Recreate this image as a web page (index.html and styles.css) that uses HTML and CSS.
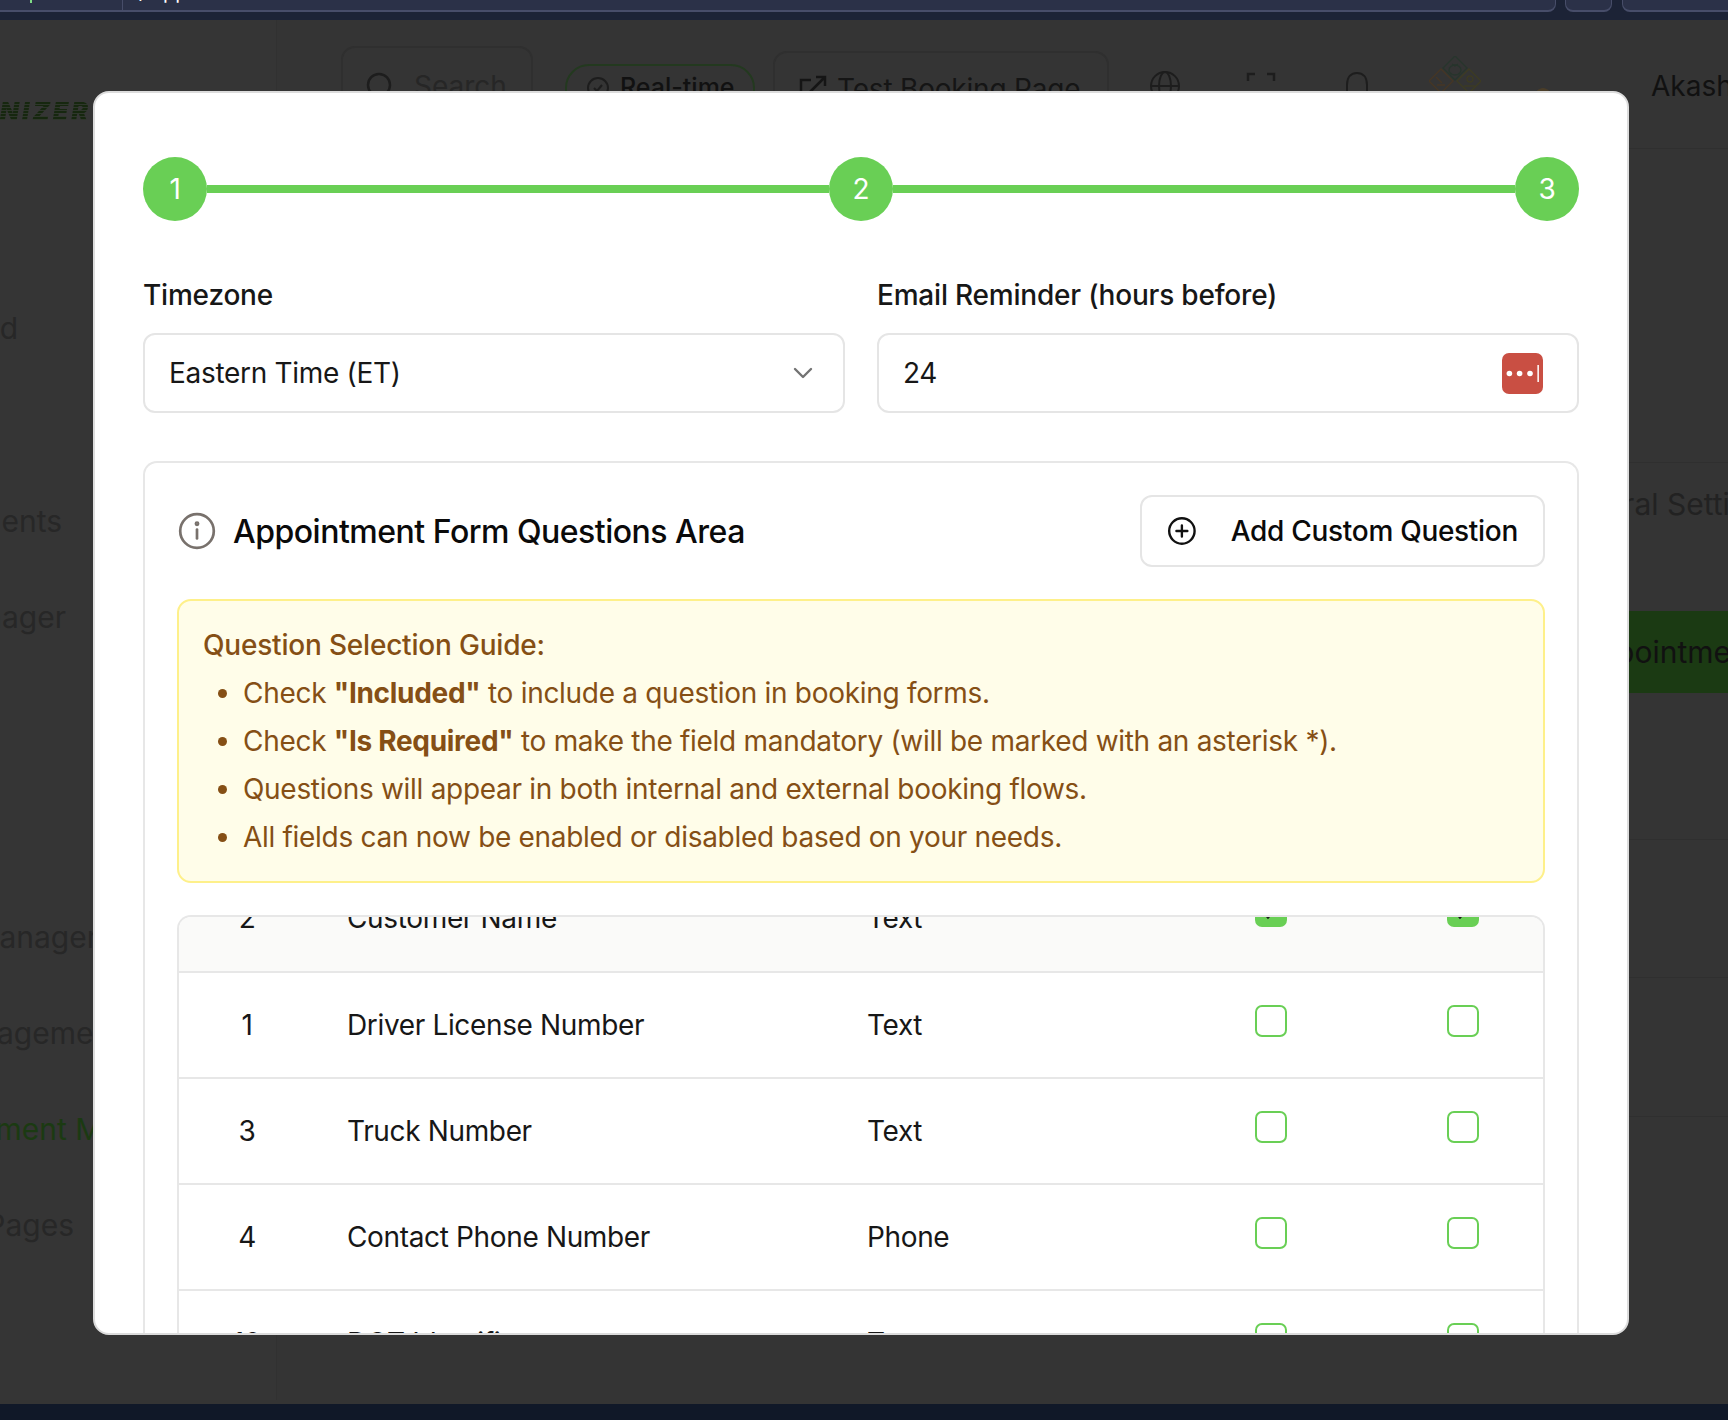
FILE: index.html
```html
<!DOCTYPE html>
<html lang="en">

<head>
    <meta charset="UTF-8">
    <title>Appointment Settings</title>
    <link rel="stylesheet" href="styles.css">
</head>

<body>
    <div class="browser-strip">
        <div class="tab tab-first"><span class="tab-mark"></span></div>
        <div class="tab tab-url"><span class="tab-text">/ app</span></div>
        <div class="tab tab-small"></div>
        <div class="tab tab-end"></div>
    </div>

    <div class="app">
        <aside class="sidebar">
            <div class="logo"><span>ORGANIZER</span></div>
            <ul class="side-nav">
                <li class="n1">Dashboard</li>
                <li class="n2">Appointments</li>
                <li class="n3">Task Manager</li>
                <li class="n4">Fleet Manager</li>
                <li class="n5">User Management</li>
                <li class="n6 active">Appointment Manager</li>
                <li class="n7">Pages</li>
            </ul>
        </aside>
        <div class="content">
            <header class="topbar">
                <div class="pill search">
                    <svg width="30" height="30" viewBox="0 0 30 30" fill="none" stroke="#1d1d1d" stroke-width="2.5"><circle cx="14" cy="14" r="11"/></svg>
                    <span>Search</span>
                </div>
                <div class="pill realtime">
                    <svg width="24" height="24" viewBox="0 0 24 24" fill="none" stroke="#1d1d1d" stroke-width="2"><circle cx="12" cy="12" r="10"/><path d="M8 12l3 3 5-6"/></svg>
                    <span>Real-time</span>
                </div>
                <div class="pill booking">
                    <svg width="30" height="30" viewBox="0 0 30 30" fill="none" stroke="#151515" stroke-width="2.5"><path d="M13 6H3v21h21V17M12 18L27 3M18 3h9v9"/></svg>
                    <span>Test Booking Page</span>
                </div>
                <svg class="top-icon globe" width="30" height="30" viewBox="0 0 30 30" fill="none" stroke="#1d1d1d" stroke-width="2"><circle cx="15" cy="15" r="14"/><ellipse cx="15" cy="15" rx="6" ry="14"/><path d="M1 15h28"/></svg>
                <svg class="top-icon" width="30" height="30" viewBox="0 0 30 30" fill="none" stroke="#1d1d1d" stroke-width="2.5"><path d="M2 10V3h7M21 3h7v7"/></svg>
                <svg class="top-icon" width="30" height="30" viewBox="0 0 30 30" fill="none" stroke="#1d1d1d" stroke-width="2"><path d="M5 30V14C5 6 9 2 15 2s10 4 10 12v16"/></svg>
                <svg class="badge-icon" width="52" height="38" viewBox="0 0 52 38" fill="none" stroke-width="1.300">
                    <g stroke="#27352c"><path d="M26 0l12 12-12 12-12-12z"/><ellipse cx="26" cy="14" rx="6" ry="5"/><path d="M23 8l3 2 3-2"/></g>
                    <g stroke="#453624"><path d="M12 13l12 12-12 12L0 25z"/><path d="M7 21l6 6M8 29h8"/></g>
                    <g stroke="#3d3b22"><path d="M40 13l12 12-12 12-12-12z"/><circle cx="41" cy="23" r="3"/><path d="M35 30h11"/></g>
                </svg>
                <svg class="small-mark" width="14" height="4" viewBox="0 0 14 4"><path d="M0 4C2 1 5 0 7 0s5 1 7 4z" fill="#4a3d28"/></svg>
                <span class="user">Akash</span>
            </header>
            <div class="page-body">
                <div class="settings-card">
                    <div class="settings-row general">General Settings</div>
                    <div class="settings-row green">Appointment</div>
                    <div class="settings-line line-a"></div>
                    <div class="settings-line line-b"></div>
                    <div class="settings-line line-c"></div>
                </div>
                <div class="bottom-card"></div>
            </div>
        </div>
    </div>
    <div class="foot-bar"></div>

    <div class="modal">
        <div class="stepper">
            <span class="step">1</span>
            <span class="step-line"></span>
            <span class="step">2</span>
            <span class="step-line"></span>
            <span class="step">3</span>
        </div>

        <div class="field-row">
            <div class="field">
                <label>Timezone</label>
                <div class="input">
                    <span>Eastern Time (ET)</span>
                    <svg class="chevron" width="20" height="12" viewBox="0 0 20 12" fill="none" stroke="#737373" stroke-width="2.4" stroke-linecap="round" stroke-linejoin="round"><path d="M2 2l8 8 8-8"/></svg>
                </div>
            </div>
            <div class="field">
                <label>Email Reminder (hours before)</label>
                <div class="input">
                    <span>24</span>
                    <svg class="pass-icon" width="41" height="41" viewBox="0 0 41 41"><rect width="41" height="41" rx="7" fill="#c94f43"/><circle cx="7.400" cy="20.500" r="2.800" fill="#fff"/><circle cx="17.600" cy="20.500" r="2.800" fill="#fff"/><circle cx="28" cy="20.500" r="2.800" fill="#fff"/><rect x="35.400" y="12" width="1.500" height="17" fill="#fff"/></svg>
                </div>
            </div>
        </div>

        <section class="questions">
            <div class="questions-head">
                <div class="questions-title">
                    <svg width="38" height="38" viewBox="0 0 38 38" fill="none" stroke="#78716c" stroke-width="2.700"><circle cx="19" cy="19" r="16.800"/><path d="M19 17.500v9" stroke-linecap="round"/><circle cx="19" cy="11.800" r="1.100"/></svg>
                    <h2>Appointment Form Questions Area</h2>
                </div>
                <button class="add-btn">
                    <svg width="30" height="30" viewBox="0 0 30 30" fill="none" stroke="#111" stroke-width="2.400" stroke-linecap="round"><circle cx="15" cy="15" r="12.800"/><path d="M15 9.500v11M9.500 15h11"/></svg>
                    <span>Add Custom Question</span>
                </button>
            </div>

            <div class="guide">
                <p>Question Selection Guide:</p>
                <ul>
                    <li>Check <b>"Included"</b> to include a question in booking forms.</li>
                    <li>Check <b>"Is Required"</b> to make the field mandatory (will be marked with an asterisk *).</li>
                    <li>Questions will appear in both internal and external booking flows.</li>
                    <li>All fields can now be enabled or disabled based on your needs.</li>
                </ul>
            </div>

            <div class="table-wrap">
                <div class="q-row q-row-cut">
                    <span class="c-num">2</span><span class="c-name">Customer Name</span><span class="c-type">Text</span>
                    <span class="c-check"><i class="box box-on"><svg width="28" height="28" viewBox="0 0 28 28" fill="none" stroke="#1a1a1a" stroke-width="3"><path d="M5 13l6 7 12-14"/></svg></i></span>
                    <span class="c-check"><i class="box box-on"><svg width="28" height="28" viewBox="0 0 28 28" fill="none" stroke="#1a1a1a" stroke-width="3"><path d="M5 13l6 7 12-14"/></svg></i></span>
                </div>
                <div class="q-row">
                    <span class="c-num">1</span><span class="c-name">Driver License Number</span><span class="c-type">Text</span>
                    <span class="c-check"><i class="box"></i></span><span class="c-check"><i class="box"></i></span>
                </div>
                <div class="q-row">
                    <span class="c-num">3</span><span class="c-name">Truck Number</span><span class="c-type">Text</span>
                    <span class="c-check"><i class="box"></i></span><span class="c-check"><i class="box"></i></span>
                </div>
                <div class="q-row">
                    <span class="c-num">4</span><span class="c-name">Contact Phone Number</span><span class="c-type">Phone</span>
                    <span class="c-check"><i class="box"></i></span><span class="c-check"><i class="box"></i></span>
                </div>
                <div class="q-row">
                    <span class="c-num">10</span><span class="c-name">DOT Identifier</span><span class="c-type">Text</span>
                    <span class="c-check"><i class="box"></i></span><span class="c-check"><i class="box"></i></span>
                </div>
            </div>
        </section>
    </div>
</body>

</html>
```

FILE: styles.css
```css
body,
html {
    margin: 0;
    padding: 0;
}

body {
    width: 1728px;
    height: 1420px;
    overflow: hidden;
    position: relative;
    background-color: #343434;
    font-family: Inter, "Liberation Sans", sans-serif;
    color: #111;
}

/* browser strip */
.browser-strip {
    height: 20px;
    background-color: #1c2336;
    display: flex;
    gap: 10px;
}

.tab {
    height: 10px;
    background-color: #2b3148;
    border-bottom: 2px solid #474d69;
}

.tab-first {
    width: 122px;
    border-right: 1px solid #474d69;
    margin-right: -10px;
}

.tab-mark {
    display: block;
    width: 2px;
    height: 3px;
    margin-left: 30px;
    background-color: #7fdc86;
}

.tab-url {
    width: 1432px;
    border-right: 1px solid #474d69;
    border-radius: 0 0 8px 0;
}

.tab-text {
    display: block;
    margin: -20px 0 0 16px;
    font-size: 20px;
    color: #fff;
}

.tab-small {
    width: 45px;
    margin-left: -1px;
    border-left: 1px solid #474d69;
    border-right: 1px solid #474d69;
    border-radius: 0 0 8px 8px;
}

.tab-end {
    flex: 1;
    border-left: 1px solid #474d69;
    border-radius: 0 0 0 8px;
}

/* page behind the dialog */
.app {
    height: 1384px;
    display: flex;
}

.sidebar {
    width: 276px;
    height: 1380px;
    flex-shrink: 0;
    border-right: 1px solid #313131;
    background-color: #353535;
}

.logo {
    width: 91px;
    height: 74px;
    padding-top: 76px;
    display: flex;
    justify-content: flex-end;
    font-size: 25px;
    font-weight: 900;
    font-style: italic;
    letter-spacing: 3px;
    white-space: nowrap;
}

.logo span {
    color: transparent;
    background: repeating-linear-gradient(#16270f 0 2px, #2f362c 2px 3px);
    -webkit-background-clip: text;
    background-clip: text;
}

.side-nav {
    list-style: none;
    margin: 0;
    padding: 0;
    font-size: 30px;
    color: #272727;
    white-space: nowrap;
}

.side-nav li {
    height: 36px;
    line-height: 36px;
    display: flex;
    justify-content: flex-end;
}

.side-nav .n1 { margin-top: 140px; width: 18px; }
.side-nav .n2 { margin-top: 157px; width: 62px; }
.side-nav .n3 { margin-top: 60px; width: 66px; }
.side-nav .n4 { margin-top: 284px; width: 98px; }
.side-nav .n5 { margin-top: 60px; width: 121px; }
.side-nav .n6 { margin-top: 60px; width: 201px; }
.side-nav .n7 { margin-top: 60px; width: 74px; }

.side-nav .active {
    color: #1b3a12;
}

.content {
    flex: 1;
    min-width: 0;
}

.topbar {
    height: 128px;
    display: flex;
    align-items: flex-start;
    padding-left: 64px;
    border-bottom: 1px solid #2f2f2f;
    font-size: 28px;
    color: #151515;
}

.pill {
    margin-top: 26px;
    height: 80px;
    display: flex;
    align-items: center;
    white-space: nowrap;
    flex-shrink: 0;
    gap: 16px;
    padding: 0 16px;
    border: 2px solid #2f2f2f;
    border-radius: 14px;
    box-sizing: border-box;
}

.search {
    width: 192px;
    gap: 19px;
    padding-left: 22px;
    color: #262626;
}

.realtime {
    margin: 44px 0 0 32px;
    width: 190px;
    align-items: flex-start;
    gap: 10px;
    padding: 6px 0 0 19px;
    border-color: #23391f;
    border-radius: 24px;
    font-size: 25px;
    font-weight: 500;
    color: #111;
}

.realtime svg {
    margin-top: 4px;
}

.booking {
    margin: 31px 0 0 18px;
    width: 336px;
    gap: 9px;
    padding: 0 0 5px 23px;
    letter-spacing: -0.2px;
}

.top-icon {
    margin: 51px 0 0 66px;
    flex-shrink: 0;
}

.top-icon.globe {
    margin-left: 41px;
}

.badge-icon {
    margin: 36px 0 0 57px;
    flex-shrink: 0;
}

.small-mark {
    margin: 68px 0 0 55px;
    flex-shrink: 0;
}

.user {
    margin: 49px 0 0 101px;
    white-space: nowrap;
    color: #111;
}

.page-body {
    padding-left: 52px;
}

.settings-card {
    height: 1201px;
    margin-left: 1211px;
}

.settings-row {
    font-size: 30px;
    line-height: 36px;
    color: #222;
    white-space: nowrap;
}

.general {
    margin-top: 313px;
    padding: 23px 0 0 8px;
    height: 125px;
    border-top: 1px solid #2f2f2f;
}

.green {
    margin-top: 0;
    height: 82px;
    line-height: 82px;
    padding-left: 37px;
    background-color: #1b3a13;
    color: #111;
}

.settings-line {
    border-bottom: 1px solid #2f2f2f;
}

.line-a { height: 146px; }
.line-b { height: 137px; }
.line-c { height: 138px; }

.bottom-card {
    height: 53px;
    border: 1px solid #2e2e2e;
    border-bottom: 0;
    border-radius: 12px 0 0 0;
}

.foot-bar {
    height: 16px;
    background-color: #101828;
}

/* dialog */
.modal {
    position: absolute;
    top: 91px;
    left: 93px;
    width: 1536px;
    height: 1244px;
    box-sizing: border-box;
    padding: 64px 48px 0;
    overflow: hidden;
    background-color: #fff;
    border: 2px solid #dcdcdc;
    border-radius: 16px;
    letter-spacing: -0.3px;
}

.stepper {
    display: flex;
    align-items: center;
}

.step {
    width: 64px;
    height: 64px;
    flex-shrink: 0;
    border-radius: 50%;
    background-color: #69cf55;
    color: #fff;
    font-size: 28px;
    line-height: 64px;
    text-align: center;
}

.step-line {
    flex: 1;
    height: 8px;
    background-color: #69cf55;
}

.field-row {
    margin-top: 56px;
    display: grid;
    grid-template-columns: 1fr 1fr;
    gap: 32px;
}

label {
    display: block;
    margin-bottom: 20px;
    font-size: 28px;
    line-height: 36px;
    font-weight: 500;
    letter-spacing: -0.2px;
    color: #171717;
}

.input {
    height: 80px;
    box-sizing: border-box;
    display: flex;
    justify-content: space-between;
    align-items: center;
    padding: 0 34px 0 24px;
    border: 2px solid #e5e5e5;
    border-radius: 12px;
    font-size: 28px;
    color: #171717;
}

.chevron {
    margin-right: -4px;
}

.questions {
    margin-top: 48px;
    padding: 32px 32px 0;
    border: 2px solid #e7e7e7;
    border-bottom: 0;
    border-radius: 14px 14px 0 0;
    height: 900px;
}

.questions-head {
    display: flex;
    justify-content: space-between;
    align-items: center;
}

.questions-title {
    display: flex;
    align-items: center;
    gap: 17px;
    margin-left: 1px;
}

h2 {
    margin: 0;
    font-size: 32px;
    font-weight: 500;
    letter-spacing: -0.5px;
    color: #0a0a0a;
}

.add-btn {
    width: 405px;
    height: 72px;
    display: flex;
    align-items: center;
    gap: 34px;
    padding: 0 25px;
    white-space: nowrap;
    background-color: #fff;
    border: 2px solid #e5e5e5;
    border-radius: 12px;
    font-family: inherit;
    font-size: 28px;
    font-weight: 500;
    letter-spacing: -0.3px;
    color: #0a0a0a;
    cursor: pointer;
}

.guide {
    margin-top: 32px;
    height: 284px;
    box-sizing: border-box;
    padding: 20px 24px 0;
    background-color: #fffde9;
    border: 2px solid #fef08a;
    border-radius: 14px;
    font-size: 28px;
    line-height: 48px;
    color: #854f15;
}

.guide p {
    margin: 0;
    font-weight: 500;
    letter-spacing: -0.2px;
}

.guide ul {
    margin: 0;
    padding-left: 40px;
}

.guide b {
    font-weight: 700;
}

.table-wrap {
    margin-top: 32px;
    height: 420px;
    overflow: hidden;
    border: 2px solid #e7e7e7;
    border-bottom: 0;
    border-radius: 14px 14px 0 0;
    font-size: 28px;
    letter-spacing: -0.35px;
    color: #171717;
}

.q-row {
    height: 106px;
    box-sizing: border-box;
    display: grid;
    grid-template-columns: 134px 554px 388px 192px 1fr;
    align-items: center;
    border-bottom: 2px solid #e7e7e7;
}

.q-row-cut {
    height: 56px;
    background-color: #fafaf9;
    align-items: start;
}

.q-row-cut > span {
    margin-top: -16px;
}

.q-row-cut > .c-check {
    margin-top: -22px;
}

.c-num {
    text-align: center;
    padding-left: 2px;
}

.c-name {
    padding-left: 34px;
}

.c-check {
    display: block;
    line-height: 0;
}

.box {
    display: block;
    width: 32px;
    height: 32px;
    box-sizing: border-box;
    margin-top: -8px;
    border: 2px solid #69cf55;
    border-radius: 7px;
}

.box-on {
    background-color: #69cf55;
    margin-top: 0;
}
```
